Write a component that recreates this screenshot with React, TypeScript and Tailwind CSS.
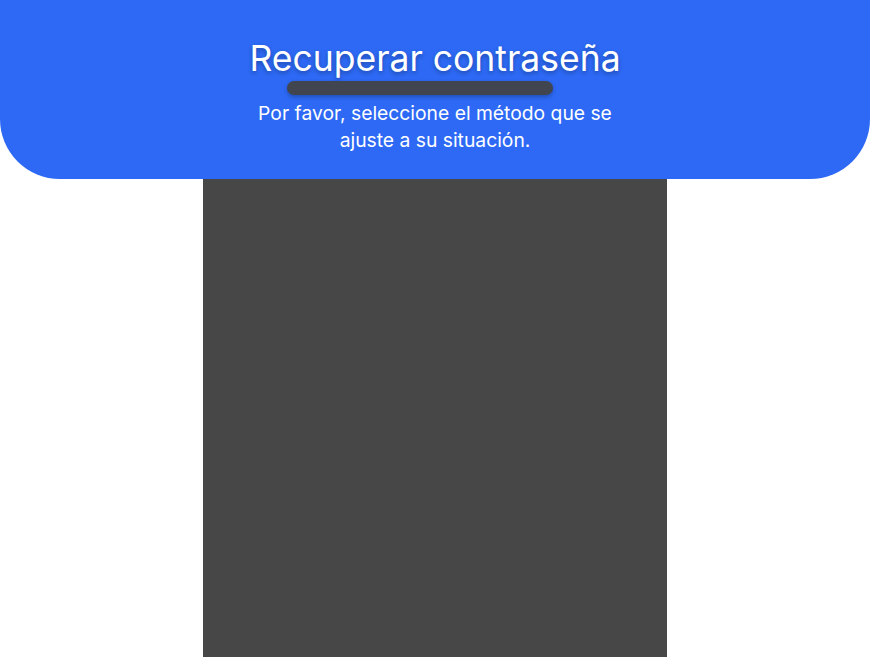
export default function App() {
  return (
    <div className="w-[870px] h-[657px] bg-white overflow-hidden flex flex-col" style={{ fontFamily: '"Inter", "Noto Sans", sans-serif' }}>
      <div className="h-[179px] shrink-0 bg-[#2d69f4] rounded-b-[60px] flex flex-col items-center pt-[37px]">
        <h1 className="text-white text-[35.5px] leading-[44px] font-normal tracking-[0px] [text-shadow:0_2px_4px_rgba(0,0,0,0.3)]">Recuperar contraseña</h1>
        <div className="mt-[0px] mr-[30px] w-[266px] h-[14px] rounded-full bg-[#41454f] shadow-[0_2px_4px_rgba(0,0,0,0.25)]" />
        <p className="mt-[5px] w-[370px] text-center text-white text-[19.3px] leading-[27px]">Por favor, seleccione el método que se ajuste a su situación.</p>
      </div>
      <div className="flex-1 flex justify-center">
        <div className="w-[464px] bg-[#474747]" />
      </div>
    </div>
  );
}
